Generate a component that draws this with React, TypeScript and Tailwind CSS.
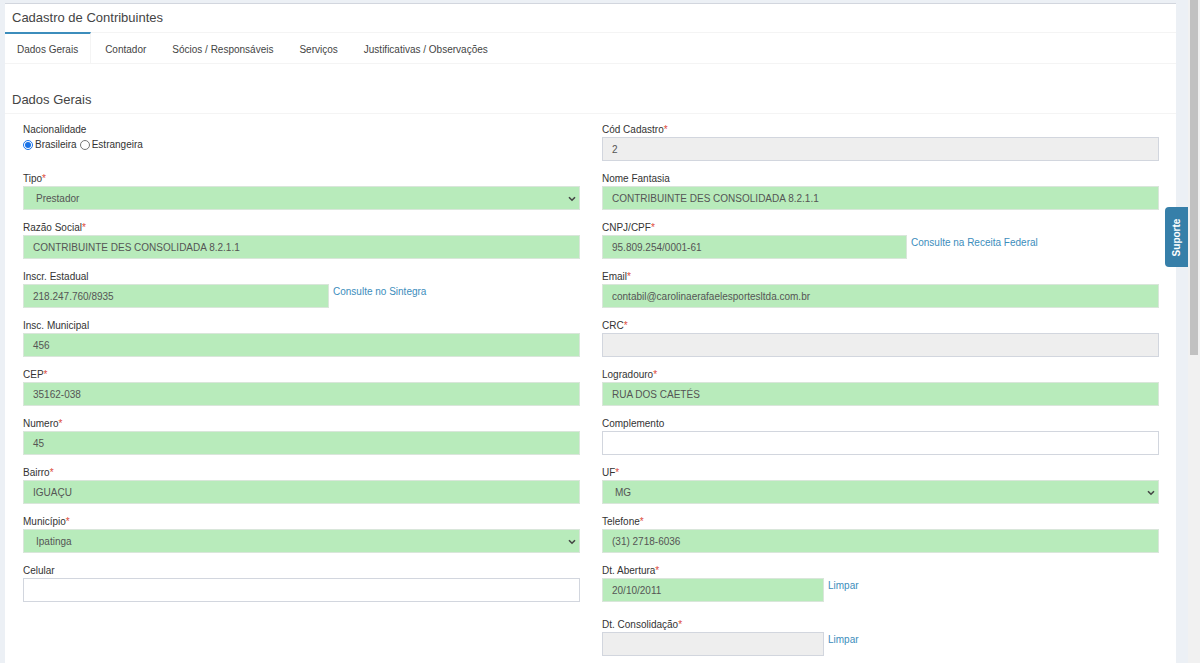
import { ReactNode } from "react";

const FONT = { fontFamily: '"Liberation Sans", Arial, sans-serif' };

type Field = {
  label: string;
  req?: boolean;
  value?: string;
  kind?: "input" | "select" | "radio";
  tone?: "green" | "gray" | "white";
  width?: string;
  link?: string;
  extra?: string;
};

const left: Field[] = [
  { label: "Nacionalidade", kind: "radio" },
  { label: "Tipo", req: true, kind: "select", value: "Prestador" },
  { label: "Razão Social", req: true, value: "CONTRIBUINTE DES CONSOLIDADA 8.2.1.1" },
  { label: "Inscr. Estadual", value: "218.247.760/8935", width: "w-[306px]", link: "Consulte no Sintegra" },
  { label: "Insc. Municipal", value: "456" },
  { label: "CEP", req: true, value: "35162-038" },
  { label: "Numero", req: true, value: "45" },
  { label: "Bairro", req: true, value: "IGUAÇU" },
  { label: "Município", req: true, kind: "select", value: "Ipatinga" },
  { label: "Celular", tone: "white" },
];

const right: Field[] = [
  { label: "Cód Cadastro", req: true, value: "2", tone: "gray" },
  { label: "Nome Fantasia", value: "CONTRIBUINTE DES CONSOLIDADA 8.2.1.1" },
  { label: "CNPJ/CPF", req: true, value: "95.809.254/0001-61", width: "w-[305px]", link: "Consulte na Receita Federal" },
  { label: "Email", req: true, value: "contabil@carolinaerafaelesportesltda.com.br" },
  { label: "CRC", req: true, tone: "gray" },
  { label: "Logradouro", req: true, value: "RUA DOS CAETÉS" },
  { label: "Complemento", tone: "white" },
  { label: "UF", req: true, kind: "select", value: "MG" },
  { label: "Telefone", req: true, value: "(31) 2718-6036" },
  { label: "Dt. Abertura", req: true, value: "20/10/2011", width: "w-[222px]", link: "Limpar", extra: "mb-[16px]" },
  { label: "Dt. Consolidação", req: true, tone: "gray", width: "w-[222px]", link: "Limpar" },
];

const tabs = ["Dados Gerais", "Contador", "Sócios / Responsáveis", "Serviços", "Justificativas / Observações"];

function Chevron() {
  return (
    <svg width="8" height="6" viewBox="0 0 8 6" className="pointer-events-none absolute right-[3px] top-[9px]">
      <path d="M1 1.2 L4 4.2 L7 1.2" fill="none" stroke="#444" strokeWidth="1.6" />
    </svg>
  );
}

function Control({ f }: { f: Field }) {
  if (f.kind === "radio") {
    return (
      <div className="flex h-[24px] items-start gap-[3px] pt-[1px] text-[10px] leading-[14px] text-[#333]">
        <label className="flex items-center gap-[2px]">
          <input type="radio" name="nac" defaultChecked className="m-0 h-[10px] w-[10px] accent-[#1a73e8]" />
          Brasileira
        </label>
        <label className="flex items-center gap-[2px]">
          <input type="radio" name="nac" className="m-0 h-[10px] w-[10px]" />
          Estrangeira
        </label>
      </div>
    );
  }
  const tone = f.tone ?? "green";
  const bg =
    tone === "green" ? "bg-[#b8ebbb] border-[#d9e6da]" : tone === "gray" ? "bg-[#eeeeee] border-[#d2d6de]" : "bg-white border-[#d2d6de]";
  const box = `h-[24px] border ${bg} text-[10px] text-[#555] flex items-center ${f.width ?? "w-full"}`;
  const inner: ReactNode =
    f.kind === "select" ? (
      <div className={`${box} relative pl-[12px]`}>
        <span>{f.value}</span>
        <Chevron />
      </div>
    ) : (
      <div className={`${box} pl-[9px]`}>{f.value}</div>
    );
  if (!f.link) return inner;
  return (
    <div className="flex items-start">
      {inner}
      <a className="ml-[4px] pt-[1px] text-[10px] leading-[14px] text-[#3c8dbc]">{f.link}</a>
    </div>
  );
}

function Column({ fields }: { fields: Field[] }) {
  return (
    <div className="flex flex-col">
      {fields.map((f) => (
        <div key={f.label} className={f.extra ?? "mb-[11px]"}>
          <div className="h-[14px] text-[10px] leading-[14px] text-[#333]">
            {f.label}
            {f.req && <span className="text-[#dd4b39]">*</span>}
          </div>
          <Control f={f} />
        </div>
      ))}
    </div>
  );
}

export default function App() {
  return (
    <div className="flex h-[663px] overflow-hidden bg-[#ecf0f5]" style={FONT}>
      <div className="relative flex-1 pl-[5px] pr-[12px] pt-[3px]">
        <div className="h-full border-t border-[#d2d6de] bg-white">
          <div className="flex h-[29px] items-center border-b border-[#f4f4f4] pl-[7px] text-[13px] text-[#444]">
            Cadastro de Contribuintes
          </div>
          <div className="flex h-[31px] border-b border-[#f4f4f4]">
            {tabs.map((t, i) => (
              <div
                key={t}
                className={
                  i === 0
                    ? "-mt-[1px] mr-[2px] flex items-center border-r border-t-2 border-r-[#f4f4f4] border-t-[#3c8dbc] bg-white px-[12px] pt-[2px] text-[10px] text-[#444]"
                    : "mr-[2px] flex items-center px-[12px] pt-[3px] text-[10px] text-[#444]"
                }
              >
                {t}
              </div>
            ))}
          </div>
          <div className="border-b border-[#f4f4f4] pb-[4px] pl-[7px] pt-[27px] text-[13px] leading-[18px] text-[#444]">
            Dados Gerais
          </div>
          <div className="grid grid-cols-2 gap-x-[22px] pl-[18px] pr-[17px] pt-[9px]">
            <Column fields={left} />
            <Column fields={right} />
          </div>
        </div>
        <div className="absolute right-0 top-[207px] flex h-[60px] w-[23px] items-center justify-center rounded-l-[4px] bg-[#367fa9]">
          <span className="-rotate-90 whitespace-nowrap text-[10px] font-bold text-white">Suporte</span>
        </div>
      </div>
      <div className="w-[12px] bg-[#f1f1f1]">
        <div className="mx-[2px] h-[355px] bg-[#c1c1c1]" />
      </div>
    </div>
  );
}
